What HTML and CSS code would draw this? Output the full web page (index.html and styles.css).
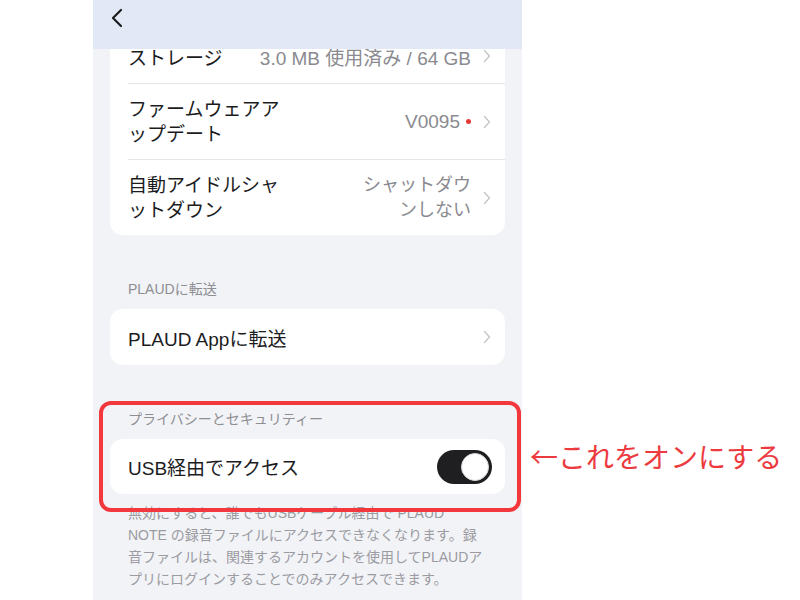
FILE: index.html
```html
<!DOCTYPE html>
<html lang="ja">
<head>
    <meta charset="UTF-8">
    <title>デバイス設定</title>
    <link rel="stylesheet" href="styles.css">
</head>
<body>
    <div class="phone">
        <div class="topbar">
            <svg class="back" width="14" height="20" viewBox="0 0 14 20">
                <polyline points="11,2 3,10 11,18" fill="none" stroke="#1c1c1e" stroke-width="2.2" stroke-linecap="round" stroke-linejoin="round"/>
            </svg>
        </div>

        <div class="content">
            <div class="card">
                <div class="row row-first">
                    <span class="label">ストレージ</span>
                    <span class="value">3.0 MB 使用済み / 64 GB</span>
                    <svg class="chev" width="8" height="14" viewBox="0 0 8 14"><polyline points="1.5,1.5 6.5,7 1.5,12.5" fill="none" stroke="#c6c6c9" stroke-width="1.4" stroke-linecap="round" stroke-linejoin="round"/></svg>
                </div>
                <div class="row row-tall">
                    <span class="label">ファームウェアア<br>ップデート</span>
                    <span class="value">V0095<i class="dot"></i></span>
                    <svg class="chev" width="8" height="14" viewBox="0 0 8 14"><polyline points="1.5,1.5 6.5,7 1.5,12.5" fill="none" stroke="#c6c6c9" stroke-width="1.4" stroke-linecap="round" stroke-linejoin="round"/></svg>
                </div>
                <div class="row row-tall">
                    <span class="label">自動アイドルシャ<br>ットダウン</span>
                    <span class="value value-multi">シャットダウ<br>ンしない</span>
                    <svg class="chev" width="8" height="14" viewBox="0 0 8 14"><polyline points="1.5,1.5 6.5,7 1.5,12.5" fill="none" stroke="#c6c6c9" stroke-width="1.4" stroke-linecap="round" stroke-linejoin="round"/></svg>
                </div>
            </div>

            <div class="section-title">PLAUDに転送</div>
            <div class="card">
                <div class="row row-single">
                    <span class="label">PLAUD Appに転送</span>
                    <svg class="chev" width="8" height="14" viewBox="0 0 8 14"><polyline points="1.5,1.5 6.5,7 1.5,12.5" fill="none" stroke="#c6c6c9" stroke-width="1.4" stroke-linecap="round" stroke-linejoin="round"/></svg>
                </div>
            </div>

            <div class="section-title">プライバシーとセキュリティー</div>
            <div class="card">
                <div class="row row-switch">
                    <span class="label">USB経由でアクセス</span>
                    <span class="switch"><span class="knob"></span></span>
                </div>
            </div>
            <p class="note">無効にすると、誰でもUSBケーブル経由で PLAUD<br>NOTE の録音ファイルにアクセスできなくなります。録<br>音ファイルは、関連するアカウントを使用してPLAUDア<br>プリにログインすることでのみアクセスできます。</p>
        </div>
    </div>

    <div class="highlight"></div>
    <div class="callout">←これをオンにする</div>
</body>
</html>
```

FILE: styles.css
```css
* {
    margin: 0;
    padding: 0;
    box-sizing: border-box;
}

body {
    background: #ffffff;
    font-family: "Liberation Sans", "Noto Sans CJK JP", sans-serif;
    width: 800px;
    height: 600px;
    overflow: hidden;
    position: relative;
}

.phone {
    position: relative;
    width: 429px;
    height: 600px;
    margin-left: 93px;
    background: #f2f3f7;
    overflow: hidden;
}

.topbar {
    position: absolute;
    top: 0;
    left: 0;
    right: 0;
    height: 49px;
    background: #e3e8f6;
    z-index: 2;
}

.back {
    position: absolute;
    left: 17px;
    top: 8px;
}

.content {
    padding: 29px 17px 0 17px;
}

.card {
    background: #ffffff;
    border-radius: 13px;
    padding-left: 18px;
}

.row {
    display: flex;
    align-items: center;
    color: #1c1c1e;
    font-size: 19px;
    padding-right: 14px;
}

.row + .row {
    border-top: 1px solid #e6e6ea;
}

.row-first {
    height: 54px;
}

.row-tall {
    height: 76px;
    line-height: 25px;
}

.row-single {
    height: 56px;
}

.row-switch {
    height: 55px;
    padding-right: 13px;
}

.label {
    flex: 1;
    white-space: nowrap;
}

.value {
    color: #8a8a8f;
    font-size: 19px;
    display: flex;
    align-items: center;
    white-space: nowrap;
}

.value-multi {
    display: block;
    text-align: right;
    font-size: 18px;
    line-height: 25px;
}

.dot {
    display: inline-block;
    width: 5px;
    height: 5px;
    border-radius: 50%;
    background: #e53935;
    margin-left: 6px;
}

.chev {
    margin-left: 12px;
    flex: none;
}

.section-title {
    color: #8e8e93;
    font-size: 14px;
    line-height: 20px;
    padding-left: 18px;
    margin-top: 44px;
    margin-bottom: 10px;
}

.switch {
    position: relative;
    width: 55px;
    height: 34px;
    border-radius: 17px;
    background: #1f1f21;
    flex: none;
}

.knob {
    position: absolute;
    right: 3px;
    top: 3px;
    width: 28px;
    height: 28px;
    border-radius: 50%;
    background: #ffffff;
    border: 1px solid #d8d8dc;
}

.note {
    color: #9b9ba1;
    font-size: 14px;
    line-height: 22px;
    padding-left: 18px;
    margin-top: 8px;
    white-space: nowrap;
}

.highlight {
    position: absolute;
    left: 99px;
    top: 401px;
    width: 422px;
    height: 111px;
    border: 4px solid #f2383d;
    border-radius: 12px;
    z-index: 3;
}

.callout {
    position: absolute;
    left: 530px;
    top: 436px;
    color: #ec3a3f;
    font-family: "Noto Sans CJK JP", sans-serif;
    font-size: 28px;
    line-height: 40px;
    white-space: nowrap;
}
```
